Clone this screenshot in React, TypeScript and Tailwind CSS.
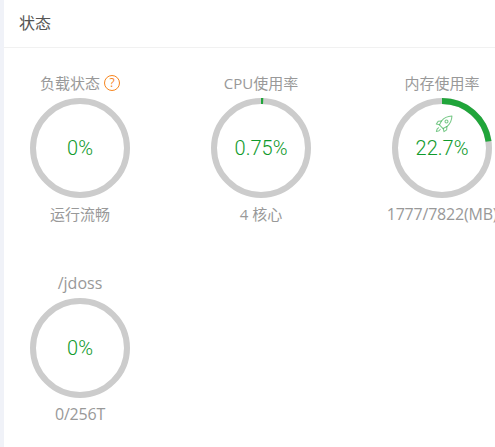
const FONT = "font-['Microsoft_YaHei','Open_Sans','Noto_Sans_CJK_SC',sans-serif]";

function Ring({ pct, children }: { pct: number; children?: React.ReactNode }) {
  const r = 47;
  const c = 2 * Math.PI * r;
  return (
    <div className="relative h-[100px] w-[100px]">
      <svg width="100" height="100" viewBox="0 0 100 100" className="block">
        <circle cx="50" cy="50" r={r} fill="none" stroke="#cccccc" strokeWidth="6" />
        <circle
          cx="50"
          cy="50"
          r={r}
          fill="none"
          stroke="#20a53a"
          strokeWidth="6"
          strokeDasharray={`${(c * pct) / 100} ${c}`}
          transform="rotate(-90 50 50)"
        />
      </svg>
      {children}
    </div>
  );
}

function Gauge({
  title,
  pct,
  value,
  sub,
  help,
  rocket,
  latinTitle,
  latinSub,
}: {
  title: string;
  pct: number;
  value: string;
  sub: string;
  help?: boolean;
  rocket?: boolean;
  latinTitle?: boolean;
  latinSub?: boolean;
}) {
  return (
    <div className="flex w-[152px] shrink-0 flex-col items-center">
      <div
        className={`flex h-[24px] items-center gap-[4px] whitespace-nowrap text-[#999] ${
          latinTitle ? "text-[16px]" : "text-[15px]"
        }`}
      >
        <span>{title}</span>
        {help && (
          <span className="flex h-[16px] w-[16px] items-center justify-center rounded-full border border-[#f7851e] text-[12px] leading-none text-[#f7851e]">
            ?
          </span>
        )}
      </div>
      <div className="mt-[3px]">
        <Ring pct={pct}>
          {rocket && (
            <svg
              width="20"
              height="20"
              viewBox="0 0 24 24"
              fill="none"
              stroke="#20a53a"
              strokeOpacity="0.6"
              strokeWidth="1.3"
              strokeLinecap="round"
              strokeLinejoin="round"
              className="absolute left-[42px] top-[16px]"
            >
              <path d="M21.5 2.5c-5.5.2-9.6 2.2-12.6 6l-2.4 4.6 4.4 4.4 4.6-2.4c3.8-3 5.8-7.1 6-12.6z" />
              <circle cx="15" cy="9" r="1.8" />
              <path d="M8.9 8.5 5 8.8 2.8 12l3.7.9M15.5 15.1l-.3 3.9-3.2 2.2-.9-3.7" />
              <path d="M5.5 16.5c-1.5.6-2.4 2-2.6 4.6 2.6-.2 4-1.1 4.6-2.6" />
            </svg>
          )}
          <div className="absolute inset-0 flex items-center justify-center font-['Roboto',sans-serif] text-[20px] font-light text-[#0f9a2b]">
            {value}
          </div>
        </Ring>
      </div>
      <div
        className={`mt-[5px] h-[22px] whitespace-nowrap leading-[22px] text-[#999] ${
          latinSub ? "text-[16px] tracking-[-0.2px]" : "text-[15px]"
        }`}
      >
        {sub}
      </div>
    </div>
  );
}

export default function App() {
  return (
    <div className={`flex h-[447px] w-[495px] overflow-hidden bg-white ${FONT}`}>
      <div className="w-[4px] shrink-0 bg-[#f0f2f8]" />
      <div className="min-w-0 flex-1">
        <div className="flex h-[48px] items-center border-b border-[#f1f1f1] pb-[2px] pl-[15px] text-[16px] text-[#555]">状态</div>
        <div className="mt-[23px] flex gap-[29px]">
          <Gauge title="负载状态" pct={0} value="0%" sub="运行流畅" help />
          <Gauge title="CPU使用率" pct={0.75} value="0.75%" sub="4 核心" />
          <Gauge title="内存使用率" pct={22.7} value="22.7%" sub="1777/7822(MB)" rocket latinSub />
        </div>
        <div className="mt-[46px] flex">
          <Gauge title="/jdoss" pct={0} value="0%" sub="0/256T" latinTitle latinSub />
        </div>
      </div>
    </div>
  );
}
